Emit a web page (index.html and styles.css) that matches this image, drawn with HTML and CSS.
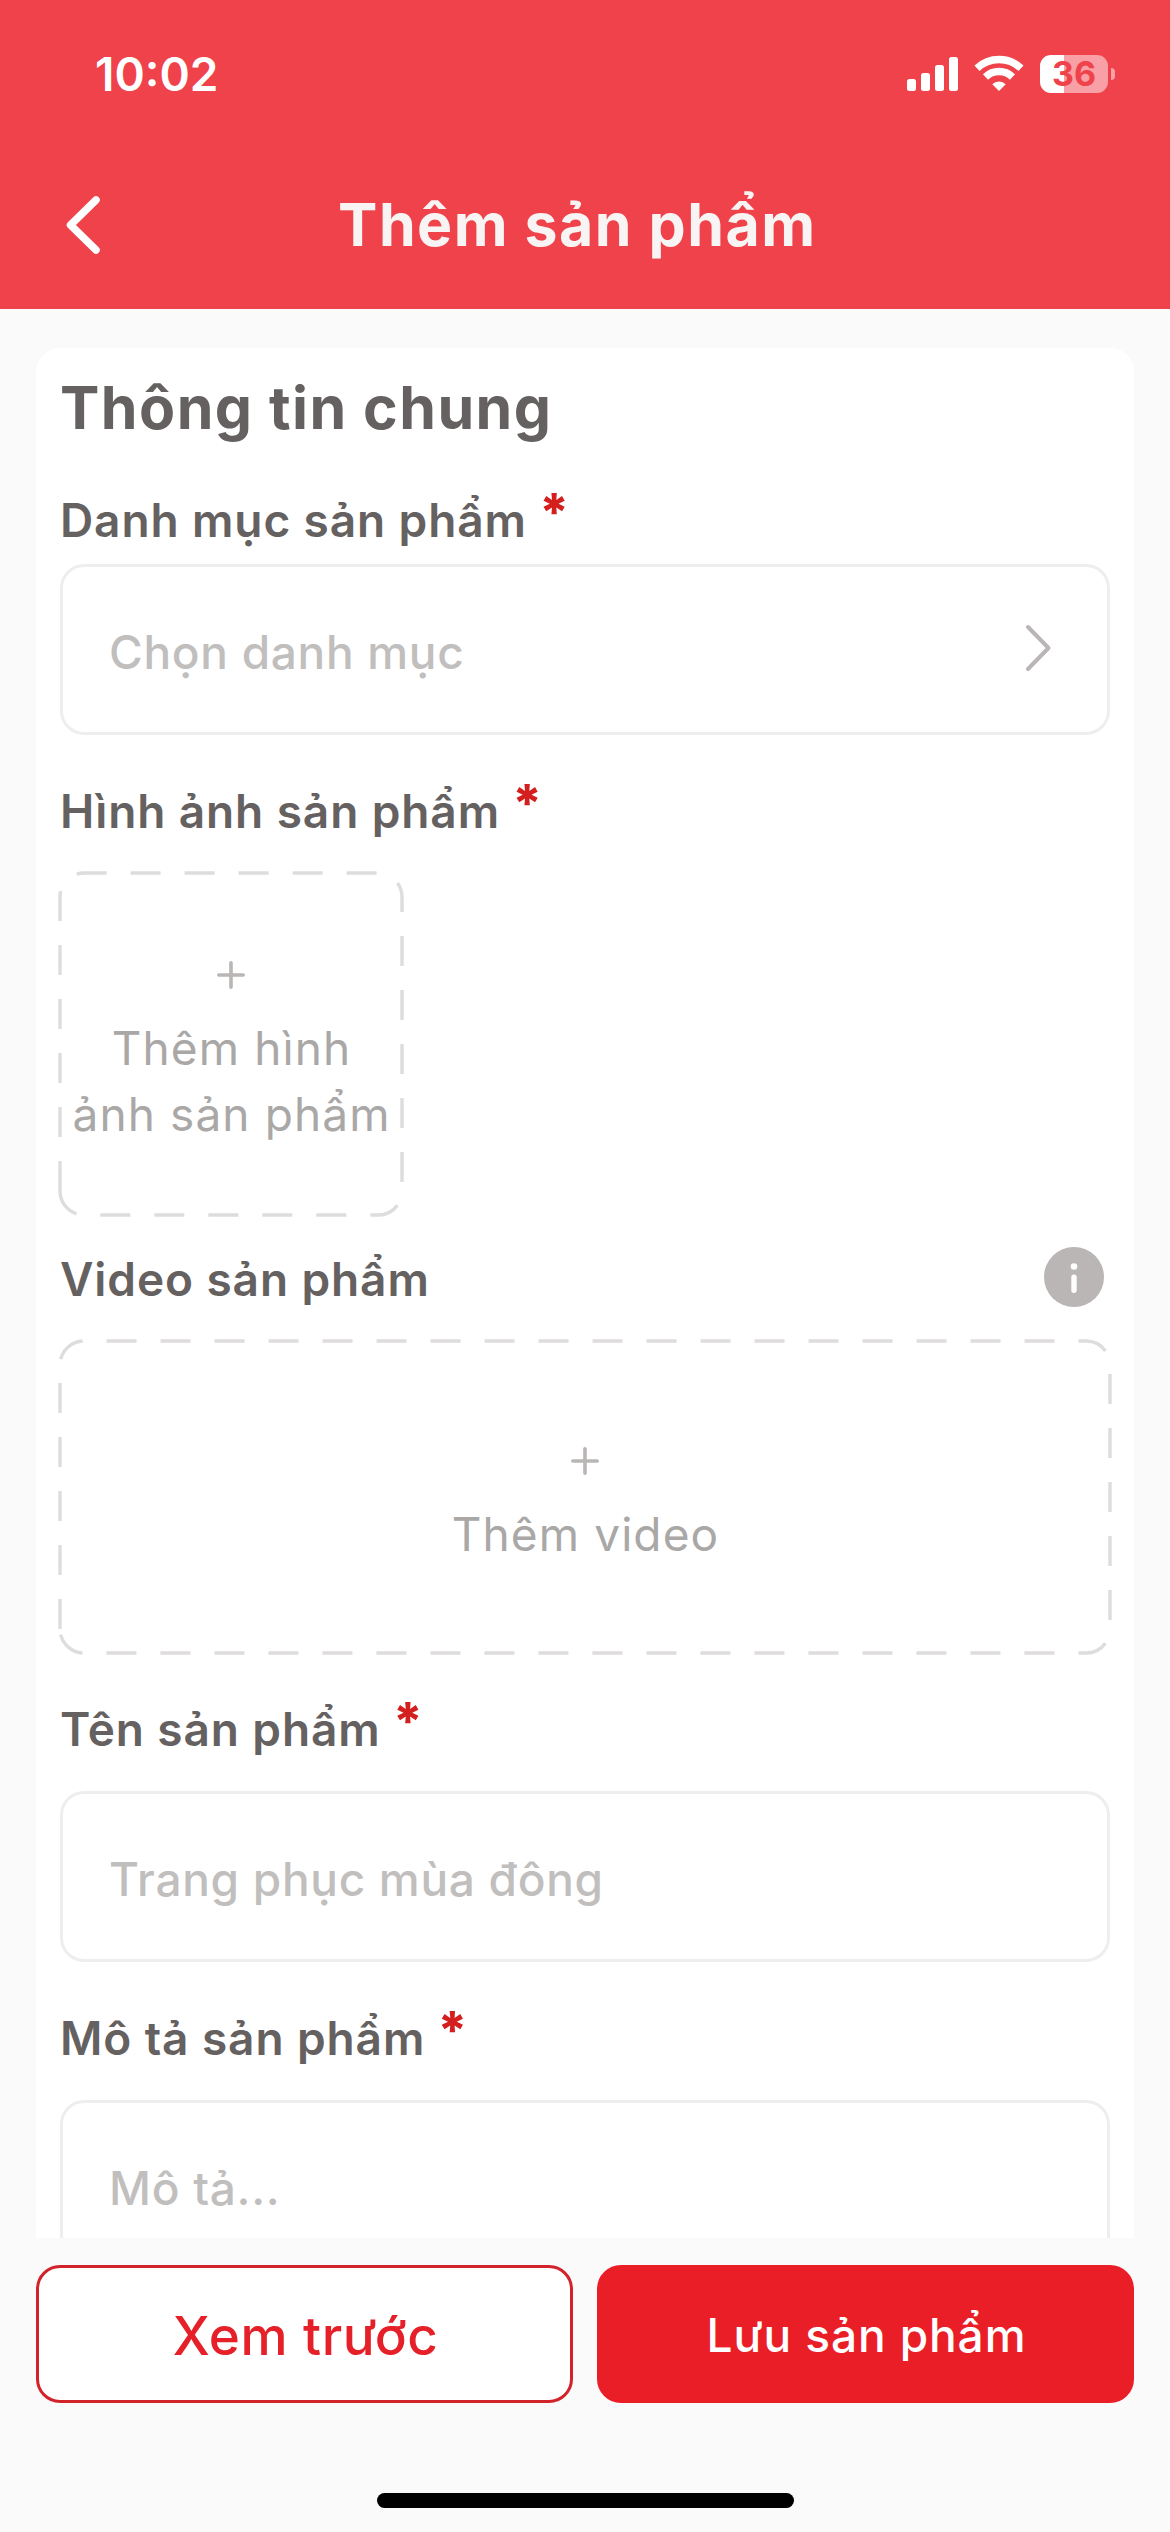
FILE: index.html
```html
<!DOCTYPE html>
<html lang="vi">
<head>
<meta charset="utf-8">
<title>Thêm sản phẩm</title>
<link rel="stylesheet" href="styles.css">
</head>
<body>
<div class="screen">
  <header class="header">
    <div class="status-bar">
      <span class="time">10:02</span>
      <div class="status-icons">
        <svg class="signal" viewBox="0 0 52 38"><g fill="#fff"><rect x="0" y="24" width="9" height="12" rx="2.5"/><rect x="14" y="18" width="9" height="18" rx="2.5"/><rect x="28" y="10" width="9" height="26" rx="2.5"/><rect x="42" y="2" width="9" height="34" rx="2.5"/></g></svg>
        <svg class="wifi" viewBox="0 0 50 38"><g fill="none" stroke="#fff" stroke-width="7.4"><path d="M3 13.2A32 32 0 0 1 47 13.2"/><path d="M11.5 22A19.5 19.5 0 0 1 38.5 22"/></g><path fill="#fff" d="M18.3 29.3A9.5 9.5 0 0 1 31.7 29.3L25 36Z"/></svg>
        <div class="battery"><div class="battery-body">36</div><div class="battery-cap"></div></div>
      </div>
    </div>
    <div class="nav">
      <svg class="back" viewBox="0 0 38 62"><path d="M32 6 6.5 31 32 56" fill="none" stroke="#fff" stroke-width="7.5" stroke-linecap="round" stroke-linejoin="round"/></svg>
      <h1 class="nav-title">Thêm sản phẩm</h1>
    </div>
  </header>

  <main class="content">
    <section class="card">
      <h2 class="section-title">Thông tin chung</h2>

      <div class="label label-category"><span>Danh mục sản phẩm</span><span class="required">*</span></div>
      <div class="field field-category">
        <span class="placeholder">Chọn danh mục</span>
        <svg class="chevron" viewBox="0 0 28 50"><path d="M3 4 23.5 25 3 46" fill="none" stroke="#b9b6b5" stroke-width="4" stroke-linecap="round" stroke-linejoin="round"/></svg>
      </div>

      <div class="label label-image"><span>Hình ảnh sản phẩm</span><span class="required">*</span></div>
      <div class="upload upload-image">
        <svg class="upload-frame" viewBox="0 0 346 346"><path d="M2 320V26A24 24 0 0 1 26 2H320A24 24 0 0 1 344 26V320A24 24 0 0 1 320 344H26A24 24 0 0 1 2 320"/></svg>
        <svg class="plus" viewBox="0 0 28 28"><path d="M14 1.8V26.2M1.8 14H26.2"/></svg>
        <span class="upload-text">Thêm hình</span>
        <span class="upload-text">ảnh sản phẩm</span>
      </div>

      <div class="label label-video"><span>Video sản phẩm</span>
        <svg class="info" viewBox="0 0 60 60"><circle cx="30" cy="30" r="30" fill="#b9b6b5"/><circle cx="30" cy="19.5" r="3.3" fill="#fff"/><rect x="27.3" y="27.5" width="5.4" height="18.5" rx="2.7" fill="#fff"/></svg>
      </div>
      <div class="upload upload-video">
        <svg class="upload-frame" viewBox="0 0 1054 316"><path d="M2 290V26A24 24 0 0 1 26 2H1028A24 24 0 0 1 1052 26V290A24 24 0 0 1 1028 314H26A24 24 0 0 1 2 290"/></svg>
        <svg class="plus" viewBox="0 0 28 28"><path d="M14 1.8V26.2M1.8 14H26.2"/></svg>
        <span class="upload-text">Thêm video</span>
      </div>

      <div class="label label-name"><span>Tên sản phẩm</span><span class="required">*</span></div>
      <div class="field field-spaced"><span class="placeholder">Trang phục mùa đông</span></div>

      <div class="label label-desc"><span>Mô tả sản phẩm</span><span class="required">*</span></div>
      <div class="field field-spaced field-tall"><span class="placeholder">Mô tả...</span></div>
    </section>
  </main>

  <footer class="footer">
    <div class="actions">
      <button class="button button-outline">Xem trước</button>
      <button class="button button-solid">Lưu sản phẩm</button>
    </div>
    <div class="home-indicator"></div>
  </footer>
</div>
</body>
</html>
```
FILE: styles.css
```css
* { box-sizing: border-box; }

body {
  margin: 0;
  background: #fafafa;
  font-family: Inter, "Liberation Sans", sans-serif;
}

h1, h2 { margin: 0; }
svg { display: block; flex: none; }

.screen {
  width: 1170px;
  height: 2532px;
  display: flex;
  flex-direction: column;
  overflow: hidden;
}

.header {
  height: 309px;
  flex: none;
  background: #ef424b;
}

.status-bar {
  height: 148px;
  padding: 0 55px 0 95px;
  display: flex;
  align-items: center;
  justify-content: space-between;
}

.time {
  color: #fff;
  font-size: 46px;
  font-weight: 600;
  line-height: 60px;
}

.status-icons { display: flex; align-items: center; }
.signal { width: 52px; height: 38px; margin-right: 15px; }
.wifi { width: 50px; height: 38px; margin-right: 16px; }
.battery { display: flex; align-items: center; gap: 3px; }

.battery-body {
  width: 68px;
  height: 38px;
  border-radius: 11px;
  background: linear-gradient(to right, #fff 24px, #f8a0a5 24px);
  color: #ef424b;
  font-size: 34px;
  font-weight: 700;
  line-height: 38px;
  text-align: center;
}

.battery-cap {
  width: 4px;
  height: 12px;
  border-radius: 0 4px 4px 0;
  background: #f8a0a5;
}

.nav {
  height: 154px;
  padding-left: 64px;
  display: flex;
  align-items: center;
}

.back { width: 38px; height: 62px; }

.nav-title {
  margin-left: 236px;
  color: #f8f4f4;
  font-size: 59px;
  font-weight: 700;
  letter-spacing: 1.5px;
  line-height: 60px;
  white-space: nowrap;
}

.content {
  height: 1929px;
  flex: none;
  padding: 39px 36px 0;
  overflow: hidden;
}

.card {
  height: 2100px;
  padding: 30px 24px;
  border-radius: 24px;
  background: #fff;
}

.section-title {
  color: #656161;
  font-size: 59px;
  font-weight: 700;
  letter-spacing: 1.45px;
  line-height: 60px;
}

.label {
  height: 54px;
  display: flex;
  color: #656161;
  font-size: 46px;
  font-weight: 600;
  letter-spacing: 0.9px;
  line-height: 53px;
  white-space: nowrap;
}

.label-category { margin-top: 56px; }
.label-image { margin-top: 50px; }
.label-video { margin-top: 36px; justify-content: space-between; }
.label-name { margin-top: 48px; }
.label-desc { margin-top: 50px; }

.required {
  margin-left: 12px;
  color: #d41f1f;
  font-size: 52px;
  font-weight: 800;
  line-height: 38px;
}

.info { width: 60px; height: 60px; margin: -6px 6px 0 0; }

.field {
  height: 171px;
  padding: 5px 54px 0 46px;
  border: 3px solid #eee;
  border-radius: 24px;
  display: flex;
  align-items: center;
  justify-content: space-between;
}

.field-category { margin-top: 16px; }
.field-spaced { margin-top: 34px; }
.field-tall { height: 400px; padding-top: 58px; align-items: flex-start; }

.placeholder {
  color: #c1bebe;
  font-size: 46px;
  font-weight: 450;
  letter-spacing: 0.7px;
  line-height: 54px;
}

.chevron { width: 28px; height: 50px; margin-bottom: 8px; }

.upload {
  position: relative;
  margin-top: 32px;
  margin-left: -2px;
  display: flex;
  flex-direction: column;
  align-items: center;
}

.upload-image { width: 346px; height: 346px; padding-top: 90px; }
.upload-video { width: 1054px; height: 316px; padding-top: 108px; }

.upload-frame {
  position: absolute;
  inset: 0;
  width: 100%;
  height: 100%;
  fill: none;
  stroke: #dedcdc;
  stroke-width: 3.4;
  stroke-dasharray: 30 24;
}

.plus {
  width: 28px;
  height: 28px;
  margin-bottom: 26px;
  fill: none;
  stroke: #b9b6b5;
  stroke-width: 3.6;
  stroke-linecap: round;
}

.upload-text {
  padding-left: 1px;
  color: #aaa7a7;
  font-size: 46px;
  letter-spacing: 1.1px;
  line-height: 66px;
  white-space: nowrap;
}

.footer { padding: 27px 36px 0; }
.actions { display: flex; gap: 24px; }

.button {
  flex: 1;
  height: 138px;
  padding: 3px 0 0 2px;
  border: 3px solid #d2232b;
  border-radius: 24px;
  font-family: inherit;
  font-weight: 500;
}

.button-outline {
  background: #fff;
  color: #e52029;
  font-size: 53px;
  letter-spacing: 0.6px;
}

.button-solid {
  padding-top: 1px;
  border-color: #ea1e27;
  background: #ea1e27;
  color: #fff;
  font-size: 46px;
  letter-spacing: 0.9px;
}

.home-indicator {
  width: 417px;
  height: 15px;
  margin: 90px auto 0;
  border-radius: 7.5px;
  background: #000;
}
```
